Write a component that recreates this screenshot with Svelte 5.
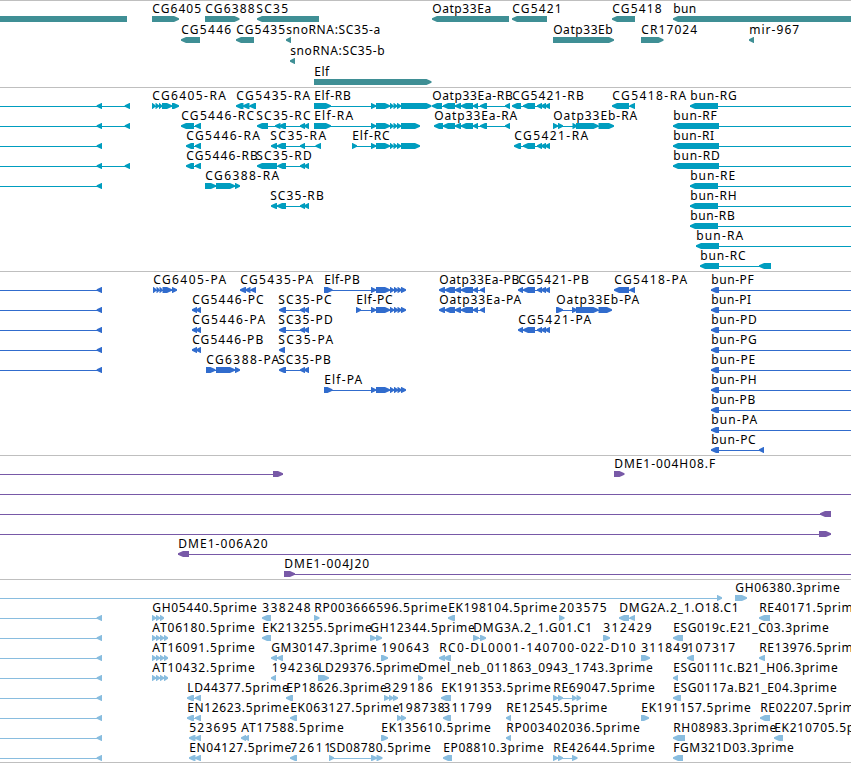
<script lang="ts">
	// Stacked genome tracks. Every track is one SVG; features sit on
	// fixed-pitch rows and x is the position along the sequence.
	type Span = [number, number];
	type Feature = {
		row: number;
		dir: 'l' | 'r';
		spans: Span[];
		label?: string;
		x?: number;      // label start
		end?: number;    // label end
		line?: Span;     // backbone, defaults to the extent of the spans
	};
	type Track = { name: string; height: number; pitch: number; features: Feature[] };

	const WIDTH = 851;
	const HEAD = 5;

	function f(row: number, label: string, x: number, end: number, dir: 'l' | 'r', spans: Span[], line?: Span): Feature {
		return { row, label, x, end, dir, spans, line };
	}

	// feature running in from the left edge
	function fromLeft(row: number, dir: 'l' | 'r', spans: Span[], to: number): Feature {
		return { row, dir, spans, line: [0, to] };
	}

	const elf: Span[] = [[371, 376], [376, 390], [390, 393.5], [393.5, 397], [397, 401]];
	const elfP: Span[] = [[371, 376], [376, 390], [390, 394], [394, 398], [397.5, 401.5], [401, 406]];
	const oatpEa: Span[] = [[443, 455], [455, 461], [461, 473], [473, 478], [480, 487], [505, 510]];
	const oatpEaP: Span[] = [[439, 445], [445, 455], [455, 461], [461, 473], [473, 478], [480, 485]];
	const cg5421: Span[] = [[523, 535], [537, 542], [541, 546], [545, 550]];
	const sc35: Span[] = [[300, 305], [304, 309]];
	const cg5446: Span[] = [[187, 194], [195, 201]];
	const four: Span[] = [[152, 156], [156, 160], [160, 164], [164, 168]];

	const genes: Feature[] = [
		// starts outside the view
		{ row: 0, dir: 'l', spans: [[-20, 127]] },
		f(0, 'CG6405', 152, 200, 'r', [[152, 179]]),
		f(0, 'CG6388', 205, 253.5, 'r', [[205, 239.5]]),
		f(0, 'SC35', 256, 287, 'l', [[257, 319]]),
		f(0, 'Oatp33Ea', 432, 490, 'l', [[432, 509]]),
		f(0, 'CG5421', 512, 560.5, 'l', [[512, 547]]),
		f(0, 'CG5418', 612, 660.5, 'l', [[612, 635]]),
		f(0, 'bun', 673, 695, 'l', [[673, 860]]),
		f(1, 'CG5446', 181, 230, 'l', [[181, 200]]),
		f(1, 'CG5435', 236, 284, 'l', [[236, 254]]),
		f(1, 'snoRNA:SC35-a', 286, 379, 'l', [[286, 291]]),
		f(1, 'Oatp33Eb', 553, 611.5, 'r', [[553, 614]]),
		f(1, 'CR17024', 641, 696, 'r', [[641, 663.5]]),
		f(1, 'mir-967', 749, 798, 'l', [[749, 754]]),
		f(2, 'snoRNA:SC35-b', 290, 383.5, 'l', [[290, 295]]),
		f(3, 'Elf', 314, 328, 'r', [[314, 431.5]])
	];

	const transcripts: Feature[] = [
		...[0, 1, 3].map((r) => fromLeft(r, 'l', [[96.7, 102], [124.7, 130]], 130)),
		...[2, 4].map((r) => fromLeft(r, 'l', [[96.7, 102]], 102)),
		f(0, 'CG6405-RA', 152, 224.7, 'r', [[152, 155.5], [155.5, 159], [159, 162], [162, 172], [172, 179]]),
		f(0, 'CG5435-RA', 236, 309, 'l', [[236, 243.5], [243, 249.5], [249.5, 256]]),
		f(0, 'Elf-RB', 314, 349.5, 'r', [[314, 331], ...elf, [401, 431.5]]),
		f(0, 'Oatp33Ea-RB', 432, 511.5, 'l', [[432, 442], ...oatpEa]),
		f(0, 'CG5421-RB', 512, 582.5, 'l', [[512, 521], ...cg5421]),
		f(0, 'CG5418-RA', 612, 685, 'l', [[612, 629], [629.5, 635]]),
		f(0, 'bun-RG', 690, 735.5, 'l', [[690, 718]], [690, WIDTH]),
		f(1, 'CG5446-RC', 181, 253, 'l', [[181, 194], [195, 201]]),
		f(1, 'SC35-RC', 256, 309.5, 'l', [[257, 268], [275, 280.5], [279, 286], ...sc35]),
		f(1, 'Elf-RA', 314, 352, 'r', [[314, 331], ...elf, [401, 420]]),
		f(1, 'Oatp33Ea-RA', 434, 516, 'l', [[434, 443], ...oatpEa]),
		f(1, 'Oatp33Eb-RA', 553, 636, 'r', [[553, 558], [558, 563], [572.5, 577], [576, 598.5], [598.5, 614]]),
		f(1, 'bun-RF', 673, 715.5, 'l', [[673, 719]], [673, WIDTH]),
		f(2, 'CG5446-RA', 186, 258.7, 'l', [[186, 194], [195, 201]]),
		f(2, 'SC35-RA', 270, 325, 'l', [[271, 277], [277, 286], [300, 305], [315.5, 321]]),
		f(2, 'Elf-RC', 352, 388.5, 'r', [[352, 357], ...elf, [401, 420]]),
		f(2, 'CG5421-RA', 514, 587, 'l', [[514, 521], ...cg5421]),
		f(2, 'bun-RI', 673, 713, 'l', [[673, 719]], [673, WIDTH]),
		f(3, 'CG5446-RB', 186, 256.7, 'l', [[186, 194], [195, 201]]),
		f(3, 'SC35-RD', 256, 310.5, 'l', [[257, 277], [277.5, 286], ...sc35]),
		f(3, 'bun-RD', 673, 718.5, 'l', [[673, 719]], [673, WIDTH]),
		f(4, 'CG6388-RA', 205, 278, 'r', [[205, 216], [216, 235], [235, 240]]),
		f(4, 'bun-RE', 690, 734, 'l', [[690, 718]], [690, WIDTH]),
		f(5, 'SC35-RB', 270, 322.5, 'l', [[271, 277], [277, 286], ...sc35]),
		f(5, 'bun-RH', 690, 735.5, 'l', [[690, 718]], [690, WIDTH]),
		f(6, 'bun-RB', 690, 733.5, 'l', [[690, 718]], [690, WIDTH]),
		f(7, 'bun-RA', 696, 742, 'l', [[696, 719]], [696, WIDTH]),
		f(8, 'bun-RC', 700, 744.5, 'l', [[700, 719], [759, 771]])
	];

	const bunEnds: [string, number][] = [
		['F', 752.5], ['I', 750], ['D', 755.5], ['G', 755.5], ['E', 754], ['H', 755.5], ['B', 754], ['A', 756]
	];

	const proteins: Feature[] = [
		...[0, 1, 2, 3, 4].map((r) => fromLeft(r, 'l', [[96.7, 102]], 102)),
		f(0, 'CG6405-PA', 153, 225, 'r', [[153, 156.5], [156.5, 159.5], [159.5, 162.5], [162.5, 172], [172, 177]]),
		f(0, 'CG5435-PA', 240, 312, 'l', [[240, 246], [245.5, 250.5], [250.5, 256]]),
		f(0, 'Elf-PB', 324, 358.5, 'r', [[324, 332.5], ...elfP]),
		f(0, 'Oatp33Ea-PB', 439, 518, 'l', oatpEaP),
		f(0, 'CG5421-PB', 518, 587.5, 'l', [[518, 523], ...cg5421]),
		f(0, 'CG5418-PA', 614, 686, 'l', [[614, 629], [629.5, 635]]),
		f(1, 'CG5446-PC', 192, 262.5, 'l', [[192, 197], [196, 201]]),
		f(1, 'SC35-PC', 278, 330.5, 'l', [[279, 286], ...sc35]),
		f(1, 'Elf-PC', 356, 391.5, 'r', [[356, 361], ...elfP]),
		f(1, 'Oatp33Ea-PA', 439, 520, 'l', oatpEaP),
		f(1, 'Oatp33Eb-PA', 556, 638, 'r', [[556, 563], [572, 577], [576, 598.5], [598.5, 612]]),
		f(2, 'CG5446-PA', 192, 264, 'l', [[192, 197], [196, 201]]),
		f(2, 'SC35-PD', 278, 331.5, 'l', [[279, 286], ...sc35]),
		f(2, 'CG5421-PA', 518, 590, 'l', [[518, 523], ...cg5421]),
		f(3, 'CG5446-PB', 192, 262, 'l', [[192, 197], [196, 201]]),
		f(3, 'SC35-PA', 278, 332, 'l', [[279, 285]]),
		f(4, 'CG6388-PA', 206, 278, 'r', [[206, 215.5], [216, 235], [235, 240]]),
		f(4, 'SC35-PB', 278, 329.5, 'l', [[279, 286], ...sc35]),
		f(5, 'Elf-PA', 324, 361, 'r', [[324, 332.5], ...elfP]),
		...bunEnds.map(([s, end], r) => f(r, `bun-P${s}`, 711, end, 'l', [[711, 719]], [711, WIDTH])),
		f(8, 'bun-PC', 711, 754.5, 'l', [[711, 719], [759, 764]])
	];

	const bacs: Feature[] = [
		fromLeft(0, 'r', [[273, 283]], 283),
		f(0, 'DME1-004H08.F', 614, 714, 'r', [[614, 624.5]]),
		fromLeft(1, 'l', [], WIDTH),
		fromLeft(2, 'l', [[820, 831]], 831),
		fromLeft(3, 'r', [[819, 831]], 831),
		f(4, 'DME1-006A20', 178, 266.5, 'l', [[178, 189]], [178, WIDTH]),
		f(5, 'DME1-004J20', 284, 368, 'r', [[284, 295]], [284, WIDTH])
	];

	const ests: Feature[] = [
		fromLeft(0, 'r', [[717, 722]], 722),
		f(0, 'GH06380.3prime', 735, 838.5, 'r', [[735, 747]]),
		...[1, 2, 3, 4, 5, 6, 7, 8].map((r) => fromLeft(r, 'l', [[96.7, 102]], 102)),
		f(1, 'GH05440.5prime', 152, 255.5, 'r', four.slice(0, 3)),
		f(1, '338248', 262, 309.5, 'l', [[262, 271]]),
		f(1, 'RP003666596.5prime', 314, 446, 'r', [[314, 319.5]]),
		f(1, 'EK198104.5prime', 448, 556, 'l', [[448, 455]]),
		f(1, '203575', 559, 605.5, 'r', [[559, 564.5]]),
		f(1, 'DMG2A.2_1.O18.C1', 619, 737.5, 'l', [[619, 629], [629.5, 635]]),
		f(1, 'RE40171.5prime', 759, 859, 'l', [[759, 770]]),
		f(2, 'AT06180.5prime', 152, 253.5, 'r', four),
		f(2, 'EK213255.5prime', 262, 370.5, 'l', [[262, 271]]),
		f(2, 'GH12344.5prime', 370, 473.5, 'r', [[370, 376], [376, 382]]),
		f(2, 'DMG3A.2_1.G01.C1', 473, 591, 'r', [[473, 479], [480, 486]]),
		f(2, '312429', 603, 650.5, 'r', [[603, 610]]),
		f(2, 'ESG019c.E21_C03.3prime', 673, 827.5, 'l', [[673, 683]]),
		f(3, 'AT16091.5prime', 152, 253.5, 'r', four),
		f(3, 'GM30147.3prime', 271, 375.5, 'l', [[271, 277], [277, 283]]),
		f(3, '190643', 381, 428, 'r', [[381, 388]]),
		f(3, 'RC0-DL0001-140700-022-D10', 439, 634.5, 'l', [[439, 445], [444, 451]]),
		f(3, '311849', 641, 687, 'r', [[641, 650]]),
		f(3, '107317', 687, 734, 'l', [[687, 694]]),
		f(3, 'RE13976.5prime', 759, 859, 'l', [[759, 765]]),
		f(4, 'AT10432.5prime', 152, 253.5, 'r', four),
		f(4, '194236', 271.5, 318, 'l', [[271, 276]]),
		f(4, 'LD29376.5prime', 318, 418, 'r', [[318, 329]]),
		f(4, 'Dmel_neb_011863_0943_1743.3prime', 418, 651.5, 'r', [[418, 423]]),
		f(4, 'ESG0111c.B21_H06.3prime', 673, 836.5, 'l', [[673, 678]]),
		f(5, 'LD44377.5prime', 187, 287.5, 'l', cg5446),
		f(5, 'EP18626.3prime', 286, 385.5, 'l', [[286, 293]]),
		f(5, '329186', 384, 431.5, 'r', [[384, 389], [389, 393.5], [393, 398]]),
		f(5, 'EK191353.5prime', 441, 549.5, 'l', [[441, 451]]),
		f(5, 'RE69047.5prime', 553, 653.5, 'r', [[553, 558], [558, 563], [572, 576.5], [576.5, 581]]),
		f(5, 'ESG0117a.B21_E04.3prime', 673, 835.5, 'l', [[673, 681]]),
		f(6, 'EN12623.5prime', 187, 288, 'l', cg5446),
		f(6, 'EK063127.5prime', 290, 398, 'l', [[290, 297]]),
		f(6, '198738', 397.5, 443.5, 'r', [[397, 402], [401, 406]]),
		f(6, '311799', 443, 490.5, 'l', [[443, 451]]),
		f(6, 'RE12545.5prime', 506, 606, 'l', [[506, 511]]),
		f(6, 'EK191157.5prime', 641, 749.5, 'r', [[641, 649]]),
		f(6, 'RE02207.5prime', 760, 860, 'l', [[760, 770]]),
		f(7, '523695', 189, 235.5, 'l', [[189, 195.5], [195, 201]]),
		f(7, 'AT17588.5prime', 241, 342.5, 'l', [[241, 246], [244, 249]]),
		f(7, 'EK135610.5prime', 381, 489.5, 'r', [[381, 388]]),
		f(7, 'RP003402036.5prime', 506, 638.5, 'l', [[506, 511]]),
		f(7, 'RH08983.3prime', 673, 775, 'l', [[673, 685]]),
		f(7, 'EK210705.5prime', 774, 882, 'l', [[774, 783]]),
		f(8, 'EN04127.5prime', 189, 290, 'l', [[189, 195.5], [195, 201]]),
		f(8, '72611', 290, 330, 'l', [[290, 297]]),
		f(8, 'SD08780.5prime', 329, 429.5, 'r', [[329, 334], [371, 377], [376.5, 382.5]]),
		f(8, 'EP08810.3prime', 443, 542.5, 'l', [[443, 452]]),
		f(8, 'RE42644.5prime', 553, 653.5, 'r', [[553, 558], [558, 563], [572, 577.5]]),
		f(8, 'FGM321D03.3prime', 673, 792.5, 'l', [[673, 683]])
	];

	const tracks: Track[] = [
		{ name: 'genes', height: 86, pitch: 21, features: genes },
		{ name: 'transcripts', height: 183, pitch: 20, features: transcripts },
		{ name: 'proteins', height: 183, pitch: 20, features: proteins },
		{ name: 'bacs', height: 123, pitch: 20, features: bacs },
		{ name: 'ests', height: 182, pitch: 20, features: ests }
	];

	// bar with a pointed end; short ones are a plain triangle
	function arrow([a, b]: Span, y: number, dir: 'l' | 'r') {
		const h = Math.min(HEAD, b - a - 0.5);
		return dir === 'r'
			? `M${a} ${y}H${b - h}L${b} ${y + 2.2}V${y + 3.8}L${b - h} ${y + 6}H${a}Z`
			: `M${b} ${y}H${a + h}L${a} ${y + 2.2}V${y + 3.8}L${a + h} ${y + 6}H${b}Z`;
	}

	function backbone(ft: Feature): Span {
		return ft.line ?? [ft.spans[0][0] + 1, ft.spans[ft.spans.length - 1][1] - 1];
	}
</script>

<main class="browser">
	{#each tracks as track}
		<section class="track {track.name}">
			<svg width={WIDTH} height={track.height} viewBox="0 0 {WIDTH} {track.height}">
				{#each track.features as ft}
					{@const y = ft.row * track.pitch + 15}
					{@const [from, to] = backbone(ft)}
					{#if ft.line || ft.spans.length > 1}
						<rect x={from} y={y + 3} width={to - from} height="1" />
					{/if}
					{#each ft.spans as span}
						<path d={arrow(span, y, ft.dir)} />
					{/each}
					{#if ft.label}
						<text x={ft.x! + 0.2} y={y - 3} textLength={ft.end! - ft.x! + 1}>{ft.label}</text>
					{/if}
				{/each}
			</svg>
		</section>
	{/each}
</main>

<style>
	:global(body) {
		background: #fff;
		overflow: hidden;
	}
	.browser {
		width: 851px;
		height: 763px;
		box-sizing: border-box;
		border-bottom: 1px solid #bfbfbf;
		overflow: hidden;
	}
	.track {
		border-top: 1px solid #bfbfbf;
	}
	.track svg {
		display: block;
		fill: currentColor;
	}
	.genes { color: #3f8f95; }
	.transcripts { color: #009dbf; }
	.proteins { color: #316ccd; }
	.bacs { color: #7859a7; }
	.ests { color: #89bddf; }
	text {
		fill: #000;
		font-family: "Noto Sans", sans-serif;
		font-size: 12px;
	}
</style>
